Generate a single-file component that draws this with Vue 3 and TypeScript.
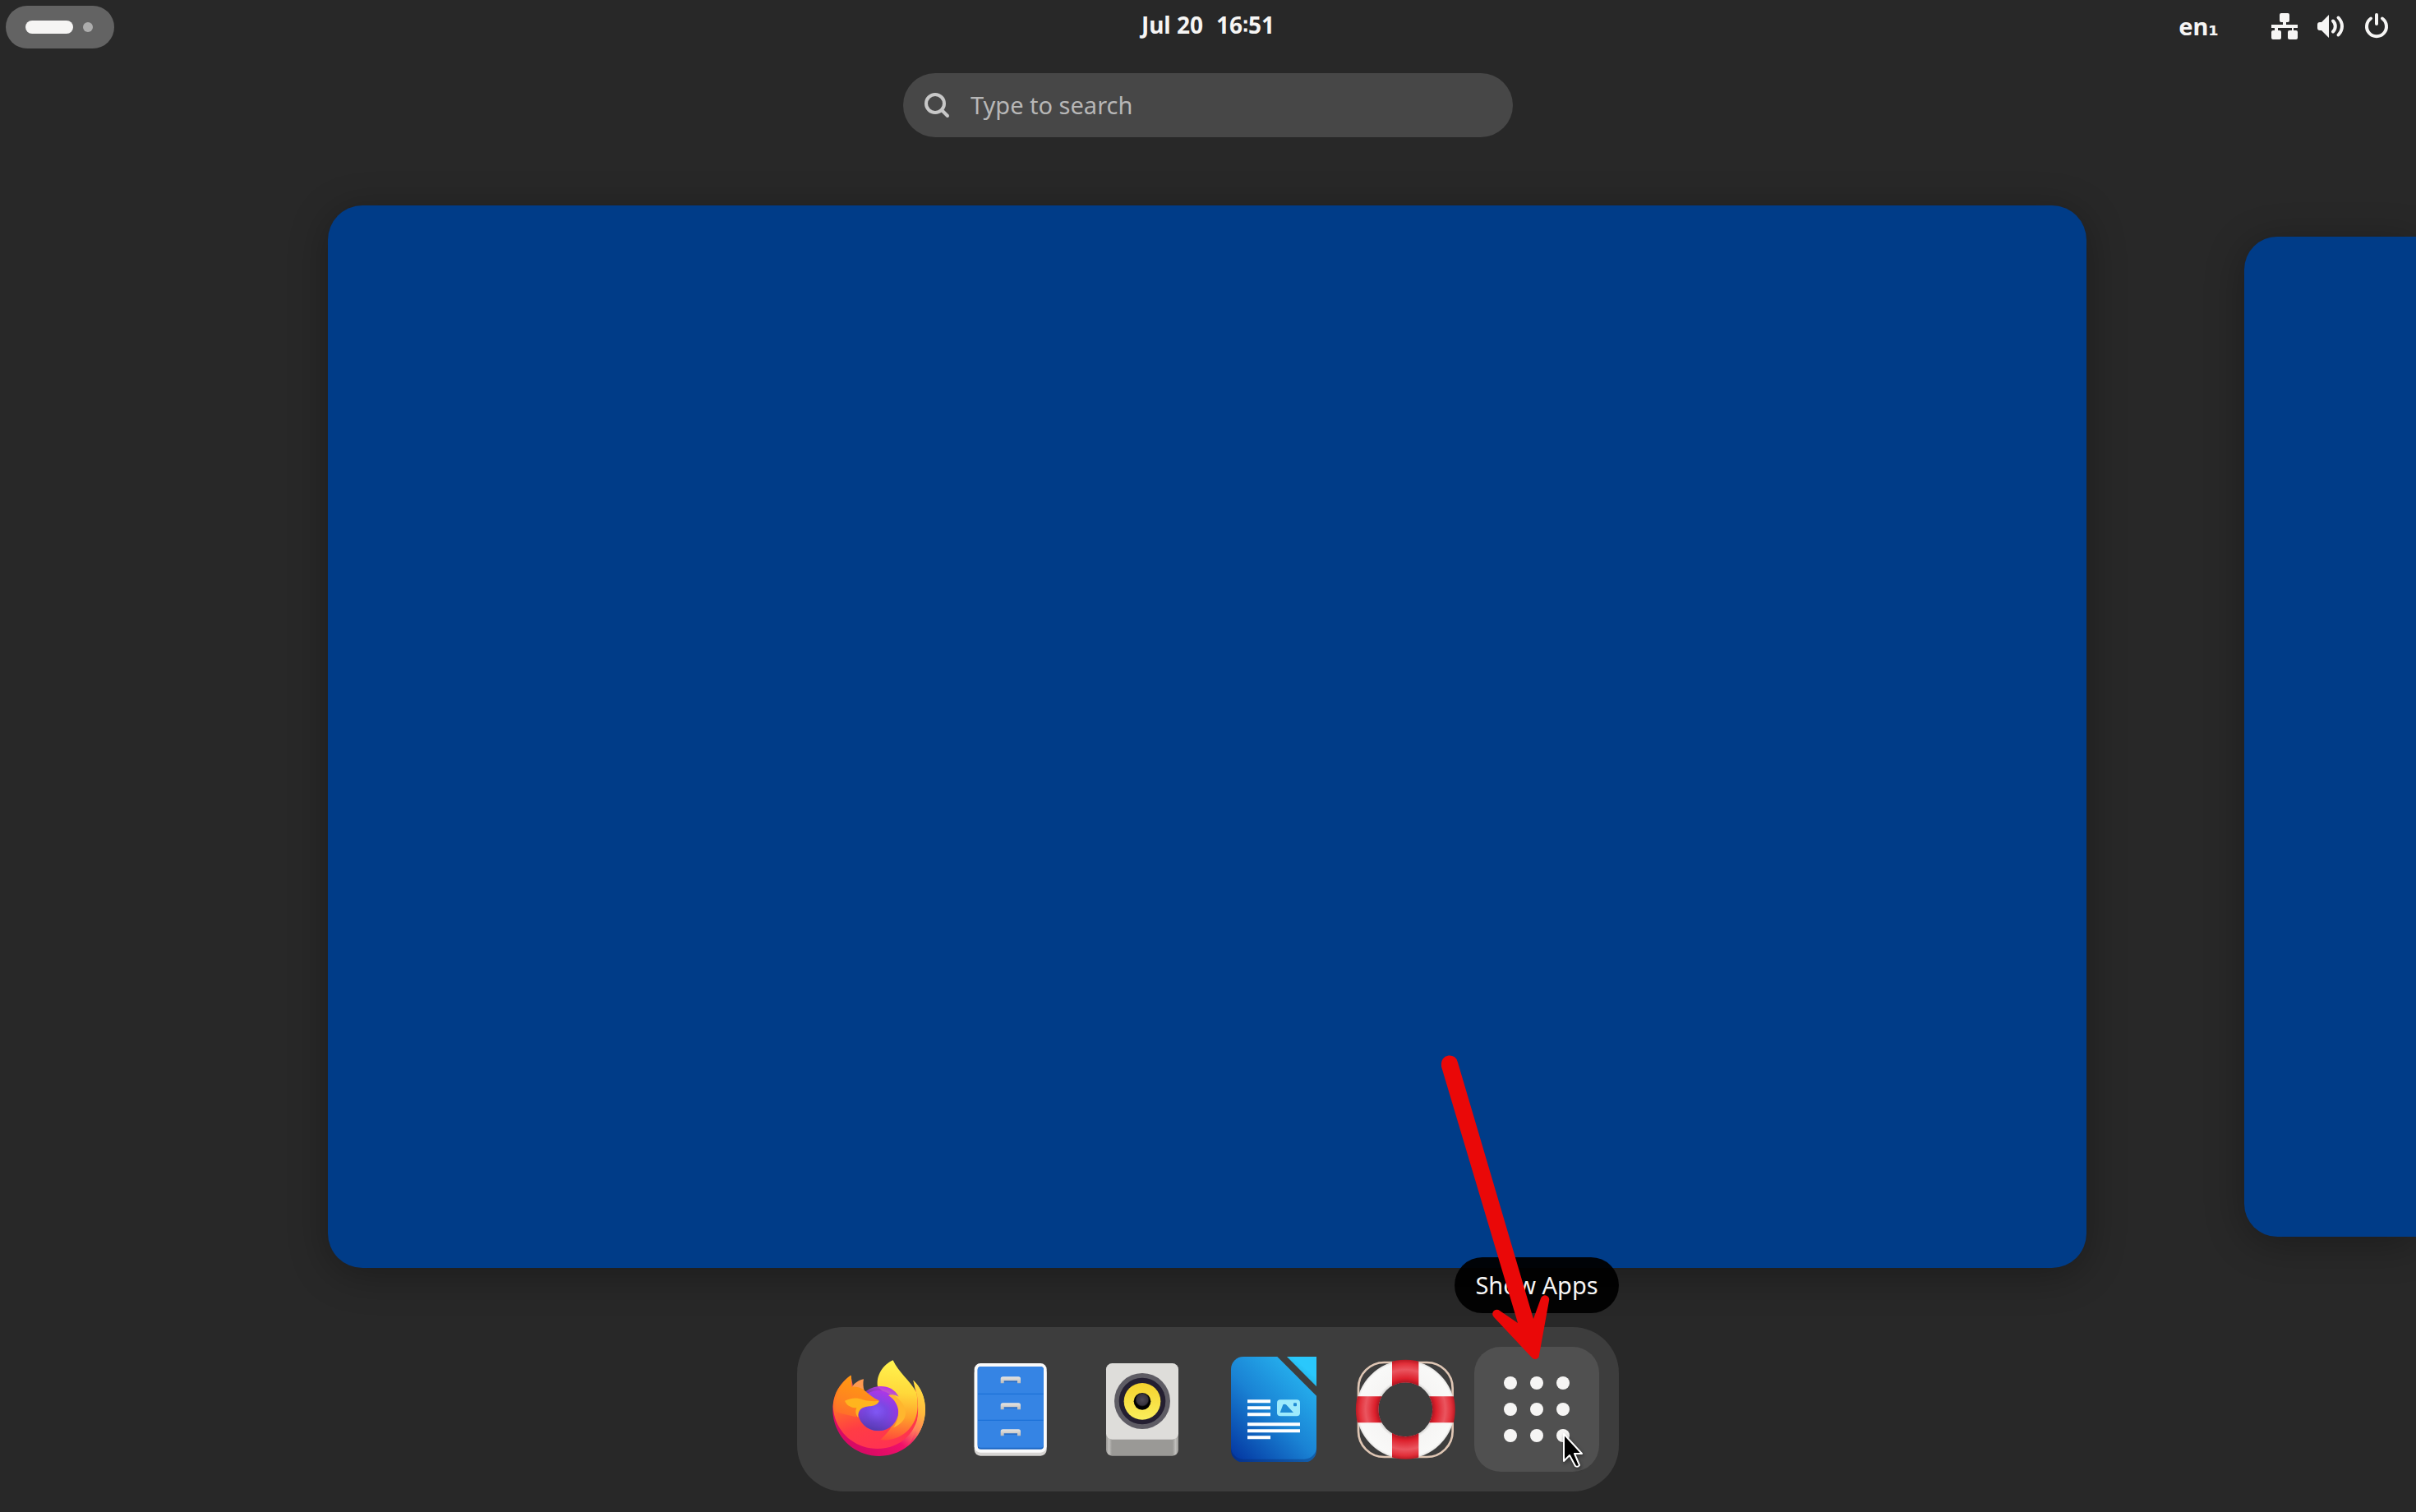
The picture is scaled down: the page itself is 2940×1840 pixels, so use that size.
<script setup lang="ts">
import { ref } from 'vue'

const query = ref('')

const gridDots: { x: number; y: number }[] = [32, 64, 96].flatMap((y) =>
  [32, 64, 96].map((x) => ({ x, y })),
)

const drawers: number[] = [0, 96, 192]
</script>

<template>
  <div class="overview">
    <header class="panel">
      <div class="panel-side">
        <button class="activities" type="button" aria-label="Activities">
          <span class="workspace-bar"></span>
          <span class="workspace-dot"></span>
        </button>
      </div>

      <button class="clock" type="button"><span>Jul 20</span><span>16∶51</span></button>

      <div class="panel-side panel-end">
        <button class="layout" type="button">en<span class="layout-index">₁</span></button>
        <button class="system" type="button" aria-label="System menu">
          <svg viewBox="0 0 32 32" class="status-icon">
            <path
              d="M12 0h8a2 2 0 0 1 2 2v7a2 2 0 0 1-2 2h-2v3h14v4h-5v3h3a2 2 0 0 1 2 2v7a2 2 0 0 1-2 2h-8a2 2 0 0 1-2-2v-7a2 2 0 0 1 2-2h3v-3H8v3h2a2 2 0 0 1 2 2v7a2 2 0 0 1-2 2H2a2 2 0 0 1-2-2v-7a2 2 0 0 1 2-2h2v-3H0v-4h14v-3h-2a2 2 0 0 1-2-2V2a2 2 0 0 1 2-2z"
              fill="currentColor"
            />
          </svg>
          <svg viewBox="0 0 32 32" class="status-icon">
            <path d="M14 2v28L5 21H3a3 3 0 0 1-3-3v-4a3 3 0 0 1 3-3h2z" fill="currentColor" />
            <path
              d="M19 9.500a9 9 0 0 1 0 13M25.500 5.500c6 6.500 6 14.500 0 21"
              fill="none"
              stroke="currentColor"
              stroke-width="4"
              stroke-linecap="round"
            />
          </svg>
          <svg viewBox="0 0 32 32" class="status-icon">
            <path
              d="M9 6.500a12 12 0 1 0 14 0"
              fill="none"
              stroke="currentColor"
              stroke-width="4"
              stroke-linecap="round"
            />
            <path d="M16 2v11" stroke="currentColor" stroke-width="4" stroke-linecap="round" />
          </svg>
        </button>
      </div>
    </header>

    <label class="search">
      <svg viewBox="0 0 32 32" class="search-icon" aria-hidden="true">
        <circle cx="14" cy="14" r="11" fill="none" stroke="currentColor" stroke-width="4" />
        <path d="M22 22l7 7" stroke="currentColor" stroke-width="4" stroke-linecap="round" />
      </svg>
      <input v-model="query" type="text" placeholder="Type to search" aria-label="Search" />
    </label>

    <main class="workspaces">
      <section class="workspace current" aria-label="Workspace 1"></section>
      <section class="workspace next" aria-label="Workspace 2"></section>
    </main>

    <nav class="dash">
      <button class="app" type="button" aria-label="Firefox">
        <svg viewBox="138 153 384 384" class="app-icon">
          <defs>
            <linearGradient id="fx-ring" x1="0.100" y1="0" x2="0.450" y2="1">
              <stop offset="0" stop-color="#ff980e" />
              <stop offset="0.350" stop-color="#ff7128" />
              <stop offset="0.700" stop-color="#ff3c45" />
              <stop offset="1" stop-color="#ff3350" />
            </linearGradient>
            <linearGradient id="fx-face" gradientUnits="userSpaceOnUse" x1="250" y1="230" x2="200" y2="400">
              <stop offset="0" stop-color="#ff9a10" />
              <stop offset="0.500" stop-color="#ff8420" />
              <stop offset="1" stop-color="#ff6030" />
            </linearGradient>
            <linearGradient id="fx-base" x1="1" y1="0.200" x2="0.300" y2="0.900">
              <stop offset="0" stop-color="#ffd23c" />
              <stop offset="0.400" stop-color="#ff8a5a" />
              <stop offset="0.650" stop-color="#f0106a" />
              <stop offset="1" stop-color="#d80a64" />
            </linearGradient>
            <linearGradient id="fx-edge" x1="0.500" y1="0" x2="0.300" y2="1">
              <stop offset="0" stop-color="#ffe243" />
              <stop offset="0.450" stop-color="#ffb83c" />
              <stop offset="0.750" stop-color="#ff8058" />
              <stop offset="1" stop-color="#f0206a" />
            </linearGradient>
            <linearGradient id="fx-flame" x1="0.400" y1="0" x2="0.350" y2="1">
              <stop offset="0" stop-color="#fff44f" />
              <stop offset="0.400" stop-color="#ffd83a" />
              <stop offset="0.700" stop-color="#ffa02a" />
              <stop offset="1" stop-color="#ff4c3a" />
            </linearGradient>
            <radialGradient id="fx-globe" cx="0.450" cy="0.550" r="0.650">
              <stop offset="0" stop-color="#8262ff" />
              <stop offset="0.400" stop-color="#7548e0" />
              <stop offset="1" stop-color="#a52bd8" />
            </radialGradient>
            <linearGradient id="fx-globe-shade" x1="0.600" y1="0" x2="0.350" y2="1">
              <stop offset="0" stop-color="#bc35e6" />
              <stop offset="0.450" stop-color="#8c48f0" stop-opacity="0.200" />
              <stop offset="1" stop-color="#4a3aa8" stop-opacity="0.900" />
            </linearGradient>
          </defs>
          <path
            d="M226 221C190 246 160 290 160 345c0 96 76 171 170 171s168-76 168-170c0-44-17-82-44-107l8 38c10 60-20 120-80 150l-120-20z"
            fill="url(#fx-base)"
          />
          <path
            d="M226 221C190 246 162 285 161 335c5 90 76 154 162 154 86 0 150-62 152-150 0-24-4-48-12-66l-60 70-90 60-66-50-18-90z"
            fill="url(#fx-ring)"
          />
          <path
            d="M380 166c-36 16-62 54-56 96l30 30 30 60c5 40-10 68-50 104 74 10 134-46 136-120 0-20-2-38-4-52-24-44-66-74-86-118z"
            fill="url(#fx-flame)"
          />
          <path
            d="M454 239c28 26 44 62 44 106 0 54-24 98-58 130 26-50 38-110 28-178-4-22-8-40-14-58z"
            fill="url(#fx-edge)"
          />
          <path d="M273 235c-18 4-34 14-42 28l44 14c-4-14-5-28-2-42z" fill="#ff9950" />
          <circle cx="326" cy="350" r="74" fill="url(#fx-globe)" />
          <path
            d="M274 284c40-34 104-32 127 15-12-6-20-8-26-6 18 18 25 38 25 60 0 42-34 70-74 70s-74-30-74-73z"
            fill="url(#fx-globe-shade)"
          />
          <path d="M363 294c8-4 22-2 32 8 44 40 44 84-14 110 28-34 28-88-18-118z" fill="#ffb62e" />
          <path
            d="M226 221c2 12 2 26 3 42 16-2 32 2 46 12 18 16 34 30 54 38-2 14-18 18-38 20-26 4-42 14-45 40-24-6-50-10-76-20-4-50 20-106 56-132z"
            fill="url(#fx-face)"
          />
          <path
            d="M204 314c18-10 44-14 66-4 20 6 40 6 59 5-6 14-20 18-36 19-28 2-42 14-40 42-8-10-12-22-6-36-18 0-36-8-43-26z"
            fill="#ffb41e"
          />
        </svg>
      </button>

      <button class="app" type="button" aria-label="Files">
        <svg viewBox="618 153 384 384" class="app-icon">
          <defs>
            <linearGradient id="handle" x1="0" y1="0" x2="0" y2="1">
              <stop offset="0" stop-color="#e6e5e3" />
              <stop offset="1" stop-color="#bdbbb8" />
            </linearGradient>
          </defs>
          <rect x="677" y="190" width="264" height="325" rx="22" fill="#d6d4d2" />
          <rect x="677" y="177" width="264" height="326" rx="22" fill="#fafafa" />
          <rect x="689" y="189" width="241" height="302" rx="12" fill="#1b66c4" />
          <rect x="689" y="189" width="241" height="296" rx="12" fill="#3584e4" />
          <path d="M690 289h239M690 385h239" stroke="#1c71d8" stroke-width="4" />
          <g v-for="dy in drawers" :key="dy" :transform="`translate(0 ${dy})`">
            <path d="M785 238h50v8h-50z" fill="#2a6fc8" />
            <path
              d="M781 226h57a8 8 0 0 1 8 8v16h-12v-9h-49v9h-12v-16a8 8 0 0 1 8-8z"
              fill="url(#handle)"
            />
          </g>
        </svg>
      </button>

      <button class="app" type="button" aria-label="Rhythmbox">
        <svg viewBox="18 153 384 384" class="app-icon">
          <defs>
            <linearGradient id="box-side" x1="0" y1="0" x2="1" y2="0">
              <stop offset="0" stop-color="#9a9996" />
              <stop offset="0.040" stop-color="#c0bfbc" />
              <stop offset="0.080" stop-color="#9a9996" />
              <stop offset="0.920" stop-color="#9a9996" />
              <stop offset="0.960" stop-color="#c0bfbc" />
              <stop offset="1" stop-color="#9a9996" />
            </linearGradient>
            <linearGradient id="cone" x1="0" y1="0" x2="0" y2="1">
              <stop offset="0" stop-color="#f5d22d" />
              <stop offset="1" stop-color="#faee5c" />
            </linearGradient>
            <radialGradient id="cap" cx="0.500" cy="0.400" r="0.550">
              <stop offset="0" stop-color="#4e4955" />
              <stop offset="0.600" stop-color="#36323d" />
              <stop offset="0.750" stop-color="#000" />
              <stop offset="1" stop-color="#000" />
            </radialGradient>
          </defs>
          <rect x="78" y="400" width="264" height="115" rx="22" fill="url(#box-side)" />
          <rect x="78" y="177" width="264" height="278" rx="22" fill="#deddda" />
          <circle cx="210" cy="315" r="102" fill="#5e5c64" />
          <circle cx="210" cy="315" r="85" fill="#241f31" />
          <circle cx="210" cy="316" r="67" fill="url(#cone)" />
          <circle cx="210" cy="316" r="31" fill="url(#cap)" />
        </svg>
      </button>

      <button class="app" type="button" aria-label="LibreOffice Writer">
        <svg viewBox="498 153 384 384" class="app-icon">
          <defs>
            <linearGradient id="page" x1="0.850" y1="0.100" x2="0.100" y2="1">
              <stop offset="0" stop-color="#27b4f0" />
              <stop offset="0.500" stop-color="#1a83d4" />
              <stop offset="1" stop-color="#053ca5" />
            </linearGradient>
            <linearGradient id="page-edge" x1="0" y1="0" x2="1" y2="0">
              <stop offset="0" stop-color="#04308c" />
              <stop offset="1" stop-color="#1360ac" />
            </linearGradient>
            <linearGradient id="fold" x1="0.350" y1="0.650" x2="0.600" y2="0.350">
              <stop offset="0" stop-color="#1585b4" />
              <stop offset="0.500" stop-color="#26bdf0" />
              <stop offset="1" stop-color="#2ac8fc" />
            </linearGradient>
          </defs>
          <path d="M534 440h312v54a45 45 0 0 1-45 45H579a45 45 0 0 1-45-45z" fill="url(#page-edge)" />
          <path
            d="M579 153h124l143 143v186a45 45 0 0 1-45 45H579a45 45 0 0 1-45-45V198a45 45 0 0 1 45-45z"
            fill="url(#page)"
          />
          <path d="M738 153h108v109z" fill="url(#fold)" />
          <path
            d="M594 316h84M594 340h84M594 364h84M594 400h192M594 424h192M594 448h84"
            stroke="#fff"
            stroke-width="12"
          />
          <rect x="702" y="310" width="84" height="60" rx="12" fill="#9deafc" />
          <path d="M713 357l11-29q5-4 11 0l27 29z" fill="#1e8ad4" />
          <rect x="762" y="322" width="12" height="12" rx="3" fill="#1e8ad4" />
        </svg>
      </button>

      <button class="app" type="button" aria-label="Help">
        <svg viewBox="78 453 384 384" class="app-icon">
          <defs>
            <radialGradient id="buoy-red" gradientUnits="userSpaceOnUse" cx="271" cy="646" r="182">
              <stop offset="0.520" stop-color="#9c1420" />
              <stop offset="0.620" stop-color="#dd202c" />
              <stop offset="0.800" stop-color="#ea5660" />
              <stop offset="0.920" stop-color="#e2303a" />
              <stop offset="1" stop-color="#b81822" />
            </radialGradient>
            <radialGradient id="buoy-white" gradientUnits="userSpaceOnUse" cx="271" cy="646" r="182">
              <stop offset="0.520" stop-color="#c8c6c4" />
              <stop offset="0.600" stop-color="#f6f5f4" />
              <stop offset="0.940" stop-color="#f9f9f8" />
              <stop offset="1" stop-color="#dcdad8" />
            </radialGradient>
            <clipPath id="buoy-bands">
              <path d="M222 453h97v384h-97zM78 598h384v96H78z" />
            </clipPath>
          </defs>
          <rect x="99" y="474" width="344" height="345" rx="94" fill="none" stroke="#dfc6b4" stroke-width="8" />
          <circle cx="271" cy="646" r="139" fill="none" stroke="url(#buoy-white)" stroke-width="80" />
          <circle
            cx="271"
            cy="646"
            r="140"
            fill="none"
            stroke="url(#buoy-red)"
            stroke-width="83"
            clip-path="url(#buoy-bands)"
          />
        </svg>
      </button>

      <button class="app hovered" type="button" aria-describedby="apps-tip" aria-label="Show Apps">
        <svg viewBox="0 0 128 128" class="app-icon">
          <circle v-for="dot in gridDots" :key="`${dot.x}-${dot.y}`" :cx="dot.x" :cy="dot.y" r="8" fill="#f6f5f4" />
        </svg>
        <span id="apps-tip" class="tooltip" role="tooltip">Show Apps</span>
        <svg viewBox="0 0 152 380" class="arrow" aria-hidden="true">
          <path
            d="M-40 16A10 10 0 0 1 -20 13L72 325L81 300A5 5 0 0 1 91 303L79 369A5 5 0 0 1 70 372L24 323A5 5 0 0 1 31 315L53 330L-40 18z"
            fill="#ea0808"
          />
        </svg>
        <svg viewBox="0 0 28 44" class="pointer" aria-hidden="true">
          <path
            d="M2 2v33l7-7 7 13q3 2 5-1l-6-14h9z"
            fill="#000"
            stroke="#fff"
            stroke-width="2"
            stroke-linejoin="round"
          />
        </svg>
      </button>
    </nav>
  </div>
</template>

<style>
body {
  margin: 0;
  background: #282828;
}
</style>

<style scoped>
.overview {
  box-sizing: border-box;
  display: flex;
  flex-direction: column;
  align-items: center;
  min-height: 100vh;
  padding-bottom: 24px;
  overflow: hidden;
  background: #282828;
  color: #f6f5f4;
  font-family: "Noto Sans", "Open Sans", sans-serif;
  font-size: 29px;
  line-height: 40px;
}

button {
  padding: 0;
  border: 0;
  background: none;
  color: inherit;
  font: inherit;
}

.panel {
  display: grid;
  grid-template-columns: 1fr auto 1fr;
  align-items: center;
  align-self: stretch;
  height: 65px;
  font-weight: 700;
}

.panel-side {
  display: flex;
  align-items: center;
  padding-left: 7px;
}

.activities {
  display: flex;
  align-items: center;
  gap: 12px;
  height: 52px;
  padding: 0 26px 0 24px;
  border-radius: 26px;
  background: #636363;
}

.workspace-bar {
  width: 58px;
  height: 16px;
  border-radius: 8px;
  background: #f6f5f4;
}

.workspace-dot {
  width: 12px;
  height: 12px;
  border-radius: 6px;
  background: #adadad;
}

.clock {
  display: flex;
  gap: 16px;
  padding-bottom: 5px;
  font-size: 28px;
}

.panel-end {
  justify-content: flex-end;
  gap: 64px;
  padding-right: 32px;
  padding-bottom: 1px;
}

.layout-index {
  font-family: "DejaVu Sans", sans-serif;
  line-height: 1;
}

.system {
  display: flex;
  gap: 24px;
}

.status-icon {
  width: 32px;
  height: 32px;
}

.search {
  box-sizing: border-box;
  display: flex;
  align-items: center;
  gap: 25px;
  width: 742px;
  height: 78px;
  margin-top: 24px;
  padding: 0 25px;
  border-radius: 39px;
  background: #474747;
  color: #c8c8c8;
}

.search-icon {
  flex: none;
  width: 32px;
  height: 32px;
}

.search input {
  flex: 1;
  min-width: 0;
  padding: 0;
  border: 0;
  outline: 0;
  background: none;
  color: #f6f5f4;
  font: inherit;
}

.search input::placeholder {
  color: #b7b7b7;
  opacity: 1;
}

.workspaces {
  display: flex;
  align-items: center;
  align-self: stretch;
  gap: 192px;
  margin-top: 83px;
  padding-left: 399px;
}

.workspace {
  background: #003c88;
  box-shadow: 0 8px 48px rgba(0, 0, 0, 0.3);
}

.current {
  flex: 1;
  aspect-ratio: 2140 / 1293;
  border-radius: 42px;
}

.next {
  align-self: stretch;
  width: 209px;
  margin: 38px 0;
  border-radius: 40px 0 0 40px;
}

.dash {
  display: flex;
  gap: 8px;
  margin-top: 72px;
  padding: 24px;
  border-radius: 56px;
  background: #3d3d3d;
}

.app {
  position: relative;
  display: flex;
  align-items: center;
  justify-content: center;
  width: 152px;
  height: 152px;
  border-radius: 32px;
}

.app-icon {
  width: 128px;
  height: 128px;
}

.hovered {
  background: #505050;
}

.tooltip {
  position: absolute;
  bottom: 193px;
  left: 50%;
  box-sizing: border-box;
  width: 200px;
  padding: 14px 0;
  border-radius: 34px;
  background: rgba(0, 0, 0, 0.95);
  text-align: center;
  transform: translateX(-50%);
  white-space: nowrap;
}

.arrow {
  position: absolute;
  bottom: 131px;
  left: 0;
  width: 152px;
  height: 380px;
  overflow: visible;
}

.pointer {
  position: absolute;
  top: 104px;
  left: 107px;
  width: 28px;
  height: 44px;
  filter: drop-shadow(1px 2px 2px rgba(0, 0, 0, 0.4));
}
</style>
